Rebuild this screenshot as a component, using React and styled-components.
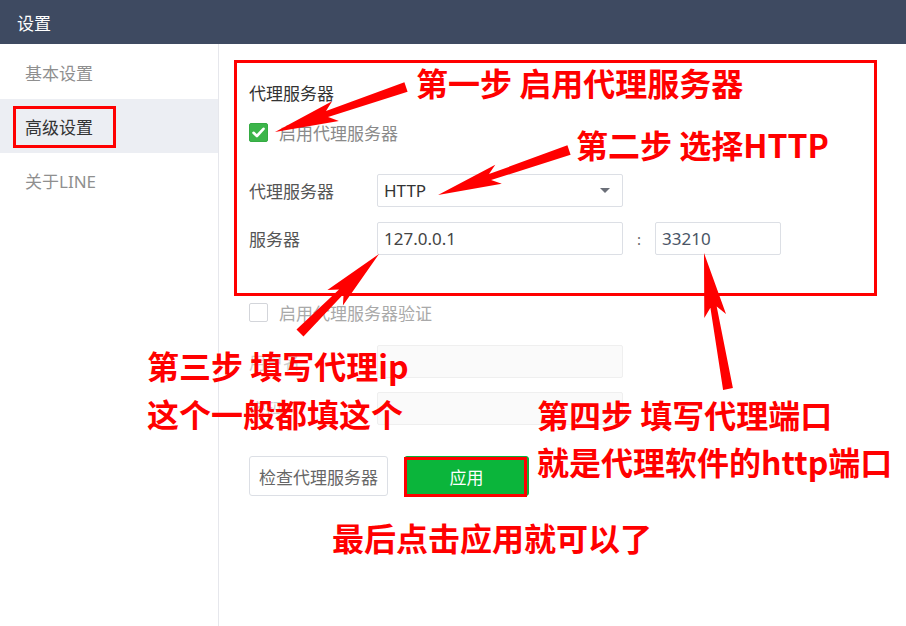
import React from "react";
import styled, { createGlobalStyle } from "styled-components";

const GlobalStyle = createGlobalStyle`
  html, body { margin: 0; padding: 0; background: #ffffff; }
  body { font-family: "Noto Sans", "Noto Sans CJK SC", sans-serif; }
  * { box-sizing: border-box; }
`;

const UI_FONT = `"Noto Sans", "Noto Sans CJK SC", sans-serif`;
const NOTE_FONT = `"Noto Sans CJK SC", "Noto Sans", sans-serif`;

const Window = styled.div`
  position: relative;
  width: 906px;
  height: 626px;
  overflow: hidden;
  background: #ffffff;
  display: flex;
  flex-direction: column;
  font-family: ${UI_FONT};
`;

const TitleBar = styled.div`
  height: 44px;
  flex: none;
  background: #3e4a61;
  color: #ffffff;
  font-size: 17px;
  display: flex;
  align-items: center;
  padding-left: 17px;
`;

const Body = styled.div`
  flex: 1;
  display: flex;
`;

const Sidebar = styled.nav`
  width: 219px;
  flex: none;
  border-right: 1px solid #e6e7ec;
  padding-top: 1px;
  display: flex;
  flex-direction: column;
`;

const NavItem = styled.div`
  height: 54px;
  display: flex;
  align-items: center;
  padding-left: 25px;
  font-size: 17px;
  color: ${(p) => (p.$active ? "#333333" : "#8f8f8f")};
  background: ${(p) => (p.$active ? "#eceef3" : "transparent")};
`;

const Main = styled.main`
  flex: 1;
  padding-left: 30px;
  display: flex;
  flex-direction: column;
  align-items: flex-start;
`;

const SectionTitle = styled.div`
  margin-top: 38px;
  font-size: 17px;
  line-height: 24px;
  color: #333333;
`;

const CheckRow = styled.label`
  margin-top: ${(p) => p.$mt}px;
  height: 20px;
  display: flex;
  align-items: center;
  gap: 11px;
`;

const Box = styled.span`
  width: 19px;
  height: 19px;
  border-radius: 2px;
  display: flex;
  align-items: center;
  justify-content: center;
  background: ${(p) => (p.$checked ? "#3cb54a" : "#ffffff")};
  border: 1px solid ${(p) => (p.$checked ? "#35ab43" : "#d3d5da")};
`;

const CheckText = styled.span`
  font-size: 17px;
  line-height: 20px;
  padding-top: 3px;
  color: ${(p) => (p.$dim ? "#a9a9a9" : "#8a8a8a")};
`;

const FieldRow = styled.div`
  margin-top: ${(p) => p.$mt}px;
  height: 33px;
  display: flex;
  align-items: center;
`;

const FieldLabel = styled.span`
  width: 128px;
  font-size: 17px;
  color: ${(p) => (p.$dim ? "#cfcfcf" : "#555555")};
`;

const Field = styled.div`
  width: ${(p) => p.$w || 246}px;
  height: 33px;
  border: 1px solid ${(p) => (p.$disabled ? "#efefef" : "#dcdfe5")};
  background: ${(p) => (p.$disabled ? "#fafafa" : "#ffffff")};
  border-radius: 2px;
  display: flex;
  align-items: center;
  justify-content: space-between;
  padding: 0 12px 0 6px;
  font-size: 17px;
  color: ${(p) => p.$color || "#333333"};
`;

const Caret = styled.span`
  width: 0;
  height: 0;
  border-left: 5px solid transparent;
  border-right: 5px solid transparent;
  border-top: 5px solid #6b6f78;
`;

const Colon = styled.span`
  width: 32px;
  text-align: center;
  font-size: 15px;
  color: #666666;
`;

const ButtonRow = styled.div`
  margin-top: 31px;
  display: flex;
  gap: 16px;
`;

const Button = styled.button`
  height: 40px;
  width: ${(p) => p.$w}px;
  border-radius: 3px;
  font-family: ${UI_FONT};
  font-size: 17px;
  padding: 0;
  border: 1px solid ${(p) => (p.$primary ? "#0aaf38" : "#dcdfe5")};
  background: ${(p) => (p.$primary ? "#0bb53b" : "#ffffff")};
  color: ${(p) => (p.$primary ? "#ffffff" : "#666666")};
`;

const Overlay = styled.div`
  position: absolute;
  inset: 0;
  pointer-events: none;
`;

const RedBox = styled.div`
  position: absolute;
  left: ${(p) => p.$x}px;
  top: ${(p) => p.$y}px;
  width: ${(p) => p.$w}px;
  height: ${(p) => p.$h}px;
  border: 3px solid #ff0000;
`;

const Note = styled.div`
  position: absolute;
  left: ${(p) => p.$x}px;
  top: ${(p) => p.$y}px;
  font-family: ${NOTE_FONT};
  font-weight: 700;
  font-size: 32px;
  line-height: 1;
  color: #ff0000;
  white-space: pre;
`;

const ArrowLayer = styled.svg`
  position: absolute;
  left: 0;
  top: 0;
`;

function arrowPoints(tail, tip, sw, hw, hl) {
  const [tx, ty] = tail;
  const [px, py] = tip;
  const dx = px - tx;
  const dy = py - ty;
  const L = Math.hypot(dx, dy);
  const ux = dx / L;
  const uy = dy / L;
  const nx = -uy;
  const ny = ux;
  const wx = px - ux * hl;
  const wy = py - uy * hl;
  const kx = px - ux * hl * 0.86;
  const ky = py - uy * hl * 0.86;
  const pts = [
    [tx + (nx * sw) / 2, ty + (ny * sw) / 2],
    [kx + nx * sw * 0.32, ky + ny * sw * 0.32],
    [wx + (nx * hw) / 2, wy + (ny * hw) / 2],
    [px, py],
    [wx - (nx * hw) / 2, wy - (ny * hw) / 2],
    [kx - nx * sw * 0.32, ky - ny * sw * 0.32],
    [tx - (nx * sw) / 2, ty - (ny * sw) / 2],
  ];
  return pts.map((p) => p.map((v) => v.toFixed(1)).join(",")).join(" ");
}

const arrows = [
  { tail: [406, 87], tip: [275, 132], sw: 10, hw: 21, hl: 64 },
  { tail: [569, 150], tip: [438, 195], sw: 10, hw: 20, hl: 64 },
  { tail: [300, 333], tip: [379, 254], sw: 10, hw: 22, hl: 62 },
  { tail: [728, 389], tip: [704, 253], sw: 10, hw: 22, hl: 64 },
];

const Check = () => (
  <svg width="13" height="11" viewBox="0 0 13 11">
    <path d="M1.5 5.8 L4.9 9 L11.5 1.8" fill="none" stroke="#ffffff" strokeWidth="2.6" strokeLinecap="round" strokeLinejoin="round" />
  </svg>
);

export default function App() {
  return (
    <>
      <GlobalStyle />
      <Window>
        <TitleBar>设置</TitleBar>
        <Body>
          <Sidebar>
            <NavItem>基本设置</NavItem>
            <NavItem $active>高级设置</NavItem>
            <NavItem>关于LINE</NavItem>
          </Sidebar>
          <Main>
            <SectionTitle>代理服务器</SectionTitle>
            <CheckRow $mt={16}>
              <Box $checked>
                <Check />
              </Box>
              <CheckText>启用代理服务器</CheckText>
            </CheckRow>
            <FieldRow $mt={32}>
              <FieldLabel>代理服务器</FieldLabel>
              <Field>
                HTTP
                <Caret />
              </Field>
            </FieldRow>
            <FieldRow $mt={15}>
              <FieldLabel>服务器</FieldLabel>
              <Field $color="#444444">127.0.0.1</Field>
              <Colon>:</Colon>
              <Field $w={126} $color="#4a5566">33210</Field>
            </FieldRow>
            <CheckRow $mt={47}>
              <Box />
              <CheckText $dim>启用代理服务器验证</CheckText>
            </CheckRow>
            <FieldRow $mt={23}>
              <FieldLabel $dim>用户名</FieldLabel>
              <Field $disabled />
            </FieldRow>
            <FieldRow $mt={14}>
              <FieldLabel $dim>密码</FieldLabel>
              <Field $disabled />
            </FieldRow>
            <ButtonRow>
              <Button $w={139}>检查代理服务器</Button>
              <Button $w={125} $primary>应用</Button>
            </ButtonRow>
          </Main>
        </Body>
        <Overlay>
          <RedBox $x={13} $y={106} $w={103} $h={42} />
          <RedBox $x={234} $y={60} $w={643} $h={236} />
          <RedBox $x={404} $y={457} $w={123} $h={40} />
          <ArrowLayer width="906" height="626" viewBox="0 0 906 626">
            {arrows.map((a, i) => (
              <polygon key={i} points={arrowPoints(a.tail, a.tip, a.sw, a.hw, a.hl)} fill="#ff0000" />
            ))}
          </ArrowLayer>
          <Note $x={416} $y={66}>第一步 启用代理服务器</Note>
          <Note $x={576} $y={128}>第二步 选择HTTP</Note>
          <Note $x={147} $y={349}>第三步 填写代理ip</Note>
          <Note $x={147} $y={397}>这个一般都填这个</Note>
          <Note $x={537} $y={398}>第四步 填写代理端口</Note>
          <Note $x={537} $y={445}>就是代理软件的http端口</Note>
          <Note $x={332} $y={521}>最后点击应用就可以了</Note>
        </Overlay>
      </Window>
    </>
  );
}
